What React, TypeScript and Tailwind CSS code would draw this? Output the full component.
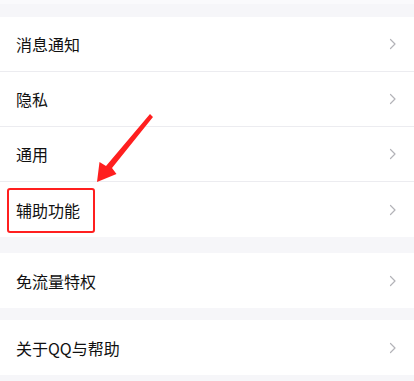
import type { ReactNode } from 'react'

// ─── Row ───────────────────────────────────────────────────

function Chevron() {
  return (
    <svg width="8" height="12" viewBox="0 0 8 12" className="shrink-0">
      <path d="M1.5 1.5 L6 6 L1.5 10.5" fill="none" stroke="#b3b3b8" strokeWidth="1.2" strokeLinecap="round" strokeLinejoin="round" />
    </svg>
  )
}

function Row({ label, divider }: { label: ReactNode; divider?: boolean }) {
  return (
    <div className={`flex items-center justify-between h-[55px] pl-4 pr-[17px] bg-white ${divider ? 'border-b border-[#ececf0]' : ''}`}>
      <span className="text-[16px] text-[#111111] leading-none">{label}</span>
      <Chevron />
    </div>
  )
}

// ─── Page ──────────────────────────────────────────────────

export default function App() {
  return (
    <div
      className="relative w-[414px] h-[381px] overflow-hidden bg-[#f6f6f9]"
      style={{ fontFamily: '"Noto Sans CJK SC", "Noto Sans", sans-serif' }}
    >
      <div className="h-[4px] bg-[#fafafc]" />
      <div className="h-[13px]" />

      <div className="bg-white">
        <Row label="消息通知" divider />
        <Row label="隐私" divider />
        <Row label="通用" divider />
        <Row label="辅助功能" />
      </div>

      <div className="h-[16px]" />
      <Row label="免流量特权" />

      <div className="h-[12px]" />
      <Row label="关于QQ与帮助" />

      {/* annotation: red box */}
      <div className="absolute left-[7px] top-[188px] w-[88px] h-[45px] border-[2px] border-[#ff1f1f] rounded-[3px]" />

      {/* annotation: arrow */}
      <svg className="absolute left-0 top-0" width="414" height="381" viewBox="0 0 414 381">
        <path d="M150 114 L153 117 L112 168 L116.5 174 L97 182 L99.5 162 L106 166 Z" fill="#ff1f1f" />
      </svg>
    </div>
  )
}
